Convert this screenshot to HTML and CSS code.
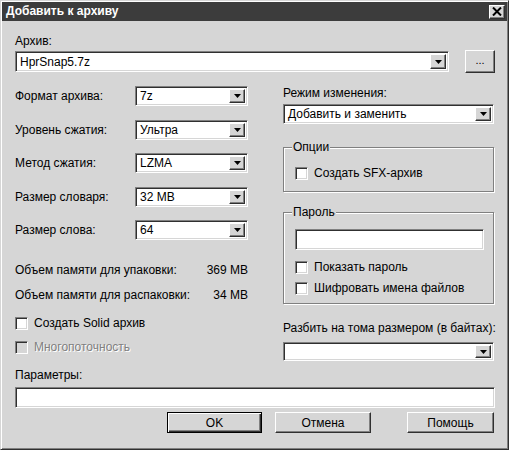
FILE: index.html
```html
<!DOCTYPE html>
<html lang="ru">
<head>
<meta charset="utf-8">
<title>Добавить к архиву</title>
<link rel="stylesheet" href="styles.css">
</head>
<body>
<div class="window">
  <div class="titlebar">
    <span class="title">Добавить к архиву</span>
    <span class="close"><svg width="10" height="9" viewBox="0 0 10 9"><path d="M1 0.5 L9 8.5 M9 0.5 L1 8.5" stroke="#000" stroke-width="2"/></svg></span>
  </div>
  <div class="content">
    <div class="label">Архив:</div>
    <div class="archive-row">
      <div class="combo sunken archive-combo"><span class="combo-text">HprSnap5.7z</span><span class="dd"><svg width="7" height="4" viewBox="0 0 7 4"><path d="M0 0H7L3.5 4Z" fill="#000"/></svg></span></div>
      <div class="btn browse">...</div>
    </div>
    <div class="main">
      <div class="left">
        <div class="field-row"><span class="flabel">Формат архива:</span><div class="combo sunken small"><span class="combo-text">7z</span><span class="dd"><svg width="7" height="4" viewBox="0 0 7 4"><path d="M0 0H7L3.5 4Z" fill="#000"/></svg></span></div></div>
        <div class="field-row"><span class="flabel">Уровень сжатия:</span><div class="combo sunken small"><span class="combo-text">Ультра</span><span class="dd"><svg width="7" height="4" viewBox="0 0 7 4"><path d="M0 0H7L3.5 4Z" fill="#000"/></svg></span></div></div>
        <div class="field-row"><span class="flabel">Метод сжатия:</span><div class="combo sunken small"><span class="combo-text">LZMA</span><span class="dd"><svg width="7" height="4" viewBox="0 0 7 4"><path d="M0 0H7L3.5 4Z" fill="#000"/></svg></span></div></div>
        <div class="field-row"><span class="flabel">Размер словаря:</span><div class="combo sunken small"><span class="combo-text">32 MB</span><span class="dd"><svg width="7" height="4" viewBox="0 0 7 4"><path d="M0 0H7L3.5 4Z" fill="#000"/></svg></span></div></div>
        <div class="field-row"><span class="flabel">Размер слова:</span><div class="combo sunken small"><span class="combo-text">64</span><span class="dd"><svg width="7" height="4" viewBox="0 0 7 4"><path d="M0 0H7L3.5 4Z" fill="#000"/></svg></span></div></div>
        <div class="mem-row mem-first"><span>Объем памяти для упаковки:</span><span>369 MB</span></div>
        <div class="mem-row mem-second"><span>Объем памяти для распаковки:</span><span>34 MB</span></div>
        <div class="check solid"><span class="box sunken"></span><span>Создать Solid архив</span></div>
        <div class="check multi disabled"><span class="box sunken"></span><span>Многопоточность</span></div>
      </div>
      <div class="right">
        <div class="label">Режим изменения:</div>
        <div class="combo sunken mode-combo"><span class="combo-text">Добавить и заменить</span><span class="dd"><svg width="7" height="4" viewBox="0 0 7 4"><path d="M0 0H7L3.5 4Z" fill="#000"/></svg></span></div>
        <div class="group options">
          <span class="legend">Опции</span>
          <div class="check"><span class="box sunken"></span><span>Создать SFX-архив</span></div>
        </div>
        <div class="group password">
          <span class="legend">Пароль</span>
          <div class="input sunken pass-input"></div>
          <div class="check pass-show"><span class="box sunken"></span><span>Показать пароль</span></div>
          <div class="check pass-enc"><span class="box sunken"></span><span>Шифровать имена файлов</span></div>
        </div>
        <div class="label split-label">Разбить на тома размером (в байтах):</div>
        <div class="combo sunken split-combo"><span class="combo-text"></span><span class="dd"><svg width="7" height="4" viewBox="0 0 7 4"><path d="M0 0H7L3.5 4Z" fill="#000"/></svg></span></div>
      </div>
    </div>
    <div class="label params-label">Параметры:</div>
    <div class="input sunken params-input"></div>
    <div class="buttons">
      <div class="btn default ok">OK</div>
      <div class="btn cancel">Отмена</div>
      <div class="btn help">Помощь</div>
    </div>
  </div>
</div>
</body>
</html>
```

FILE: styles.css
```css
* { box-sizing: border-box; }
html, body { margin: 0; padding: 0; background: #d6d6d6; }
body {
  font-family: "Liberation Sans", Arial, sans-serif;
  font-size: 12px;
  color: #000;
}
.window {
  width: 509px;
  height: 450px;
  background: #d6d6d6;
  border: 1px solid;
  border-color: #d6d6d6 #303030 #303030 #d6d6d6;
  box-shadow: inset 1px 1px 0 #fff, inset -1px -1px 0 #808080;
  padding: 1px;
  overflow: hidden;
}
.titlebar {
  height: 19px;
  background: #3c3c3c;
  display: flex;
  align-items: center;
  justify-content: space-between;
  padding: 0 2px 0 4px;
}
.title {
  color: #fff;
  font-weight: bold;
  font-size: 12px;
  line-height: 19px;
}
.close {
  width: 16px;
  height: 14px;
  background: #d6d6d6;
  border: 1px solid;
  border-color: #fff #303030 #303030 #fff;
  box-shadow: inset -1px -1px 0 #808080;
  display: flex;
  align-items: center;
  justify-content: center;
}
.content {
  padding: 13px 12px 0 13px;
}
.label {
  line-height: 14px;
  height: 14px;
  white-space: nowrap;
}
.sunken {
  background: #fff;
  border: 1px solid;
  border-color: #808080 #fff #fff #808080;
  box-shadow: inset 1px 1px 0 #303030, inset -1px -1px 0 #d6d6d6;
}
.combo {
  display: flex;
  align-items: stretch;
  padding: 2px;
}
.combo-text {
  flex: 1;
  padding-left: 2px;
  display: flex;
  align-items: center;
  white-space: nowrap;
}
.dd {
  width: 16px;
  background: #d6d6d6;
  border: 1px solid;
  border-color: #fff #303030 #303030 #fff;
  box-shadow: inset -1px -1px 0 #808080;
  display: flex;
  align-items: center;
  justify-content: center;
}
.archive-row {
  display: flex;
  align-items: center;
  height: 21px;
  margin-top: 3px;
}
.archive-combo {
  width: 434px;
  height: 21px;
}
.btn {
  background: #d6d6d6;
  border: 1px solid;
  border-color: #fff #303030 #303030 #fff;
  box-shadow: inset -1px -1px 0 #808080;
  display: flex;
  align-items: center;
  justify-content: center;
}
.browse {
  width: 30px;
  height: 23px;
  margin-left: 16px;
  padding-bottom: 3px;
  font-size: 11px;
  flex: none;
}
.main {
  display: flex;
  margin-top: 14px;
}
.left {
  width: 233px;
  display: flex;
  flex-direction: column;
}
.field-row {
  display: flex;
  align-items: center;
  height: 20px;
  margin-bottom: 13.5px;
}
.flabel {
  width: 120px;
  white-space: nowrap;
}
.small {
  width: 113px;
  height: 20px;
}
.mem-row {
  display: flex;
  justify-content: space-between;
  line-height: 14px;
  white-space: nowrap;
}
.mem-first { margin-top: 9.5px; }
.mem-second { margin-top: 11px; }
.check {
  display: flex;
  align-items: center;
  line-height: 14px;
  height: 14px;
  white-space: nowrap;
}
.box {
  width: 13px;
  height: 13px;
  margin-right: 6px;
  flex: none;
}
.solid { margin-top: 14px; }
.multi { margin-top: 10px; }
.disabled { color: #808080; text-shadow: 1px 1px 0 #fff; }
.disabled .box { background: #d6d6d6; }
.right {
  margin-left: 35px;
  width: 211px;
  display: flex;
  flex-direction: column;
}
.mode-combo {
  margin-top: 4px;
  height: 20px;
}
.group {
  position: relative;
  border: 1px solid #808080;
  box-shadow: inset 1px 1px 0 #fff, 1px 1px 0 #fff;
  padding: 0 10px 0 11px;
}
.legend {
  position: absolute;
  top: -8px;
  left: 8px;
  padding: 0 1px;
  background: #d6d6d6;
  line-height: 14px;
}
.options {
  margin-top: 23px;
  height: 45px;
  padding-top: 18px;
}
.password {
  margin-top: 20px;
  height: 92px;
  padding-top: 16px;
}
.pass-input {
  width: 189px;
  height: 21px;
}
.pass-show { margin-top: 10px; }
.pass-enc { margin-top: 7px; }
.split-label { margin-top: 17px; }
.split-combo {
  margin-top: 7px;
  height: 19px;
}
.params-label { margin-top: 7px; }
.params-input {
  margin-top: 5px;
  height: 21px;
  width: 480px;
}
.buttons {
  display: flex;
  margin-top: 4px;
  padding-left: 152px;
}
.buttons .btn { height: 21px; }
.ok { width: 95px; }
.cancel { width: 96px; margin-left: 13px; }
.help { width: 87px; margin-left: 36px; }
.default {
  border: 1px solid #000;
  box-shadow: inset 1px 1px 0 #fff, inset -1px -1px 0 #303030, inset -2px -2px 0 #808080;
}
```
